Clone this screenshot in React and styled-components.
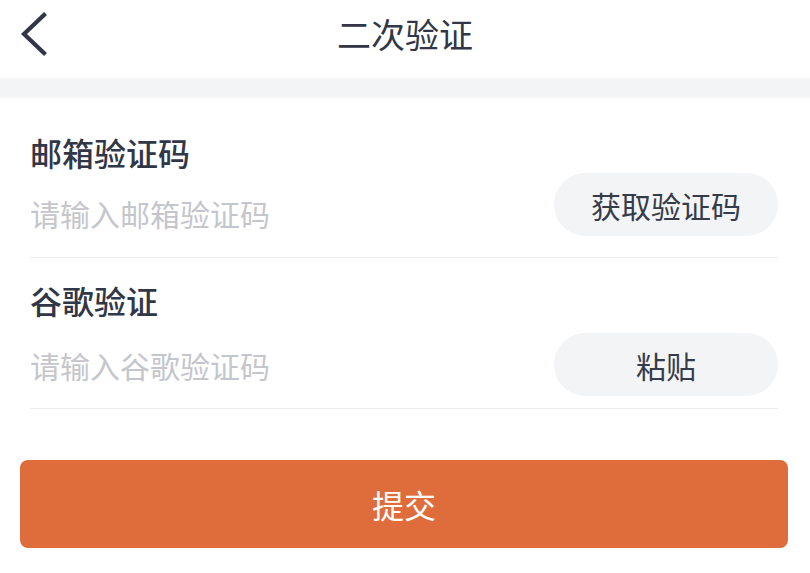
import React from 'react';
import styled, { createGlobalStyle } from 'styled-components';

const GlobalStyle = createGlobalStyle`
  html, body {
    margin: 0;
    padding: 0;
    background: #ffffff;
    font-family: "Noto Sans CJK SC", "Noto Sans", sans-serif;
    color: #313746;
  }
  * {
    box-sizing: border-box;
  }
`;

const Page = styled.div`
  width: 810px;
  min-height: 573px;
  background: #ffffff;
`;

const Header = styled.header`
  display: grid;
  grid-template-columns: 1fr auto 1fr;
  align-items: center;
  height: 68px;
  margin-bottom: 10px;
  padding: 0 20px;
`;

const BackButton = styled.button`
  justify-self: start;
  display: flex;
  align-items: center;
  border: none;
  background: none;
  padding: 0;
  cursor: pointer;
  color: #313746;
`;

const Title = styled.h1`
  margin: 0;
  font-size: 34px;
  font-weight: 400;
  line-height: 68px;
  color: #313746;
`;

const Divider = styled.div`
  height: 20px;
  background: #f3f4f6;
`;

const Form = styled.div`
  margin: 0 32px 0 30px;
`;

const Field = styled.div`
  padding: ${p => p.$top}px 0 ${p => p.$bottom}px;
  border-bottom: 1px solid #ebecee;
`;

const Label = styled.div`
  font-size: 32px;
  font-weight: 500;
  line-height: 40px;
  color: #313746;
`;

const InputRow = styled.div`
  display: flex;
  align-items: center;
  height: 63px;
  margin-top: ${p => p.$gap}px;
`;

const Input = styled.input`
  flex: 1;
  min-width: 0;
  border: none;
  outline: none;
  background: transparent;
  padding: ${p => p.$shift}px 0 0 0;
  font-family: inherit;
  font-size: 30px;
  line-height: 40px;
  color: #313746;

  &::placeholder {
    color: #c4c6cc;
  }
`;

const PillButton = styled.button`
  width: 224px;
  height: 63px;
  border: none;
  border-radius: 32px;
  background: #f3f4f6;
  font-family: inherit;
  font-size: 30px;
  color: #363b49;
  cursor: pointer;
`;

const Submit = styled.button`
  display: block;
  width: 768px;
  height: 88px;
  margin: 51px 0 0 20px;
  border: none;
  border-radius: 8px;
  background: #df6d3c;
  color: #ffffff;
  font-family: inherit;
  font-size: 32px;
  cursor: pointer;
`;

const ChevronLeft = () => (
  <svg width="30" height="44" viewBox="0 0 30 44">
    <polyline
      points="24,3 4,22 24,41"
      fill="none"
      stroke="currentColor"
      strokeWidth="4.2"
      strokeLinecap="square"
      strokeLinejoin="miter"
    />
  </svg>
);

const fields = [
  { label: '邮箱验证码', placeholder: '请输入邮箱验证码', action: '获取验证码', top: 34, gap: 1, shift: 16, bottom: 21 },
  { label: '谷歌验证', placeholder: '请输入谷歌验证码', action: '粘贴', top: 22, gap: 13, shift: 0, bottom: 12 },
];

export default function App() {
  return (
    <Page>
      <GlobalStyle />
      <Header>
        <BackButton aria-label="返回">
          <ChevronLeft />
        </BackButton>
        <Title>二次验证</Title>
        <span />
      </Header>
      <Divider />
      <Form>
        {fields.map(f => (
          <Field key={f.label} $top={f.top} $bottom={f.bottom}>
            <Label>{f.label}</Label>
            <InputRow $gap={f.gap}>
              <Input $shift={f.shift} placeholder={f.placeholder} />
              <PillButton>{f.action}</PillButton>
            </InputRow>
          </Field>
        ))}
      </Form>
      <Submit>提交</Submit>
    </Page>
  );
}
